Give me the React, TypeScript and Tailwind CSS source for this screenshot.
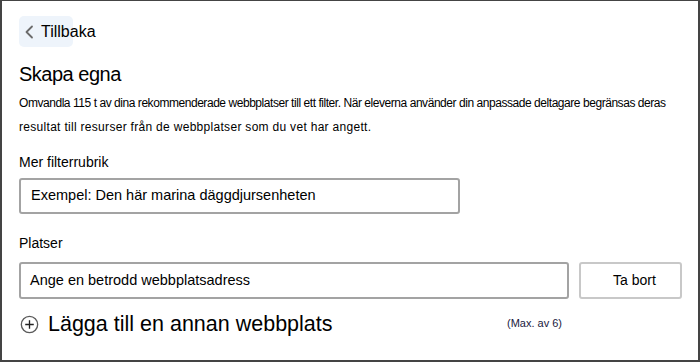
import React from "react";

export default function App() {
  return (
    <div
      className="w-[700px] h-[362px] bg-white border-x-2 border-b-2 border-t border-[#444444] pl-[17px] text-black overflow-hidden"
      style={{ fontFamily: '"Liberation Sans", Arial, sans-serif' }}
    >
      {/* Back button */}
      <div className="mt-[15px] relative h-[31px] flex items-center">
        <div className="absolute left-0 top-0 h-[31px] w-[54px] rounded-[5px] bg-[#eef4fb]" />
        <div className="relative flex items-center pl-[5px]">
          <svg width="10" height="14" viewBox="0 0 10 14" className="mr-[7px]">
            <path d="M8 1.5 L2.5 7 L8 12.5" fill="none" stroke="#6b6b6b" strokeWidth="1.8" strokeLinecap="round" strokeLinejoin="round" />
          </svg>
          <span className="text-[16px] leading-[20px] whitespace-nowrap">Tillbaka</span>
        </div>
      </div>

      {/* Title */}
      <h1 className="mt-[15px] text-[20px] leading-[24px] tracking-[-0.5px] font-normal">Skapa egna</h1>

      {/* Description */}
      <p className="mt-[5px] text-[12px] leading-[24px] whitespace-nowrap">
        <span className="tracking-[-0.45px]">
          Omvandla 115 t av dina rekommenderade webbplatser till ett filter. När eleverna använder din anpassade deltagare begränsas deras
        </span>
        <br />
        <span className="tracking-[0.3px]">resultat till resurser från de webbplatser som du vet har angett.</span>
      </p>

      {/* Label 1 */}
      <div className="mt-[13px] text-[14px] leading-[20px]">Mer filterrubrik</div>
      <div className="mt-[6px] w-[441px] h-[36px] border-2 border-[#a3a3a3] rounded-[3px] flex items-center pl-[10px] text-[14.5px]">
        Exempel: Den här marina däggdjursenheten
      </div>

      {/* Label 2 */}
      <div className="mt-[19px] text-[14px] leading-[20px]">Platser</div>
      <div className="mt-[9px] flex gap-[10px]">
        <div className="w-[550px] h-[37px] border-2 border-[#a3a3a3] rounded-[3px] flex items-center pl-[9px] text-[14.5px]">
          Ange en betrodd webbplatsadress
        </div>
        <button className="w-[103px] h-[37px] border-2 border-[#c8c8c8] rounded-[3px] bg-white flex items-center justify-center pl-[8px] text-[14px]">
          Ta bort
        </button>
      </div>

      {/* Add row */}
      <div className="mt-[11px] w-[543px] h-[28px] flex items-center">
        <svg width="19" height="19" viewBox="0 0 20 20" className="ml-[1px] mr-[9px]">
          <circle cx="10" cy="10" r="8.6" fill="none" stroke="#5a5a5a" strokeWidth="1.4" />
          <path d="M10 5.5 V14.5 M5.5 10 H14.5" stroke="#222" strokeWidth="1.4" />
        </svg>
        <span className="text-[21.5px] leading-[28px] whitespace-nowrap">Lägga till en annan webbplats</span>
        <span className="ml-auto text-[11px] text-[#1a1a40] -mt-[2px] whitespace-nowrap">(Max. av 6)</span>
      </div>
    </div>
  );
}
